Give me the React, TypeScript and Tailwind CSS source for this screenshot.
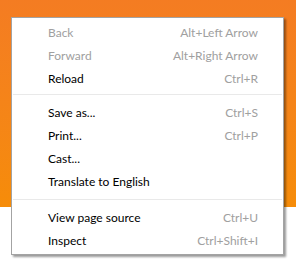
import React from "react";

type Item = { label: string; shortcut?: string; disabled?: boolean };

function Row({ label, shortcut, disabled }: Item) {
  return (
    <div className="flex h-[23px] items-center justify-between pl-[36px] pr-[25px]">
      <span className={disabled ? "text-[#a0a0a0]" : "text-black"}>{label}</span>
      {shortcut ? <span className="text-[#a0a0a0]">{shortcut}</span> : null}
    </div>
  );
}

export default function App() {
  return (
    <div
      className="relative h-[264px] w-[296px] overflow-hidden bg-white"
      style={{ fontFamily: 'Lato, "Open Sans", sans-serif' }}
    >
      <div className="h-[207px] w-full bg-gradient-to-b from-[#f47c22] to-[#f68c08]" />
      <div className="absolute left-[11px] top-[17px] w-[273px] border border-[#a3a3a3] bg-white pt-[3px] pb-[2px] text-[12px] leading-[23px] shadow-[2px_2px_2px_rgba(0,0,0,0.4)]">
        <Row label="Back" shortcut="Alt+Left Arrow" disabled />
        <Row label="Forward" shortcut="Alt+Right Arrow" disabled />
        <Row label="Reload" shortcut="Ctrl+R" />
        <div className="mx-[1px] mt-[4px] mb-[6px] h-px bg-[#e9e9e9]" />
        <Row label="Save as..." shortcut="Ctrl+S" />
        <Row label="Print..." shortcut="Ctrl+P" />
        <Row label="Cast..." />
        <Row label="Translate to English" />
        <div className="mx-[1px] mt-[6px] mb-[6px] h-px bg-[#e9e9e9]" />
        <Row label="View page source" shortcut="Ctrl+U" />
        <Row label="Inspect" shortcut="Ctrl+Shift+I" />
      </div>
    </div>
  );
}
